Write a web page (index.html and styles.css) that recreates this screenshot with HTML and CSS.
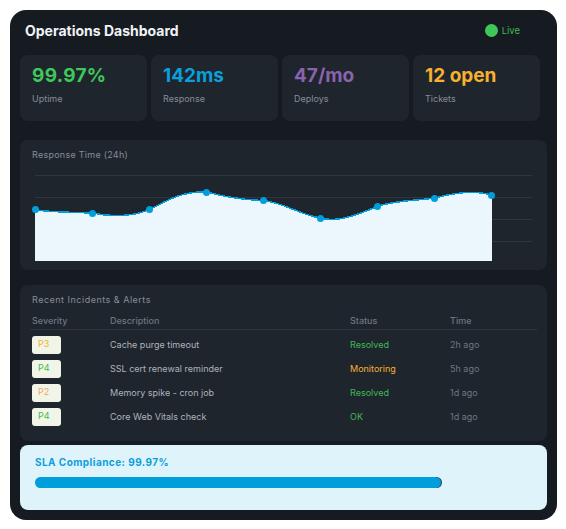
FILE: index.html
```html
<!DOCTYPE html>
<html lang="en">
<head>
<meta charset="utf-8">
<title>Operations Dashboard</title>
<link rel="stylesheet" href="styles.css">
</head>
<body>
<main class="dash">
  <header class="head">
    <h1 class="title">Operations Dashboard</h1>
    <div class="live"><span class="dot"></span><span>Live</span></div>
  </header>
  <section class="stats">
    <div class="stat"><div class="val green">99.97%</div><div class="lab">Uptime</div></div>
    <div class="stat"><div class="val blue">142ms</div><div class="lab">Response</div></div>
    <div class="stat"><div class="val purple">47/mo</div><div class="lab">Deploys</div></div>
    <div class="stat"><div class="val amber">12 open</div><div class="lab">Tickets</div></div>
  </section>
  <section class="panel chart">
    <h2 class="ptitle">Response Time (24h)</h2>
    <svg class="plot" width="527" height="95" viewBox="20 170 527 95">
      <g class="grid" shape-rendering="crispEdges">
        <line x1="35" x2="532" y1="175.5" y2="175.5"/>
        <line x1="35" x2="532" y1="197.5" y2="197.5"/>
        <line x1="35" x2="532" y1="219.5" y2="219.5"/>
        <line x1="35" x2="532" y1="241.5" y2="241.5"/>
      </g>
      <path class="area" shape-rendering="crispEdges" d="M35.5 210 C50 212,75 212.5,92.5 213 C105 216,130 218,149.5 209.5 C165 202,180 191,206.5 192 C225 197,245 200,263.5 200.5 C285 203,300 215,320.5 218 C335 222,350 218,377.5 206.5 C395 200,415 201,434.5 198 C450 194,475 189,491.5 195.5 L492 261 L35 261 Z"/>
      <path class="line" shape-rendering="crispEdges" d="M35.5 210 C50 212,75 212.5,92.5 213 C105 216,130 218,149.5 209.5 C165 202,180 191,206.5 192 C225 197,245 200,263.5 200.5 C285 203,300 215,320.5 218 C335 222,350 218,377.5 206.5 C395 200,415 201,434.5 198 C450 194,475 189,491.5 195.5"/>
      <g class="pts">
        <circle cx="35.5" cy="209.5" r="3.5"/><circle cx="92.5" cy="213.5" r="3.5"/><circle cx="149.5" cy="209.5" r="3.5"/>
        <circle cx="206.5" cy="192.5" r="3.5"/><circle cx="263.5" cy="200.5" r="3.5"/><circle cx="320.5" cy="218.5" r="3.5"/>
        <circle cx="377.5" cy="206.5" r="3.5"/><circle cx="434.5" cy="198.5" r="3.5"/><circle cx="491.5" cy="195.5" r="3.5"/>
      </g>
    </svg>
  </section>
  <section class="panel incidents">
    <h2 class="ptitle">Recent Incidents &amp; Alerts</h2>
    <table class="tbl">
      <thead><tr><th class="c1">Severity</th><th class="c2">Description</th><th class="c3">Status</th><th class="c4">Time</th></tr></thead>
      <tbody>
        <tr><td><span class="badge amber">P3</span></td><td>Cache purge timeout</td><td class="green">Resolved</td><td class="muted">2h ago</td></tr>
        <tr><td><span class="badge green">P4</span></td><td>SSL cert renewal reminder</td><td class="amber">Monitoring</td><td class="muted">5h ago</td></tr>
        <tr><td><span class="badge peach">P2</span></td><td>Memory spike - cron job</td><td class="green">Resolved</td><td class="muted">1d ago</td></tr>
        <tr><td><span class="badge green">P4</span></td><td>Core Web Vitals check</td><td class="green">OK</td><td class="muted">1d ago</td></tr>
      </tbody>
    </table>
  </section>
  <section class="sla">
    <div class="slatext">SLA Compliance: 99.97%</div>
    <div class="bar"></div>
  </section>
</main>
</body>
</html>
```
FILE: styles.css
```css
* { box-sizing: border-box; }
html, body { margin: 0; padding: 0; background: #fff; }
body { font-family: "Inter", "Liberation Sans", sans-serif; }
.dash {
  margin: 10px 0 0 10px;
  width: 547px;
  height: 510px;
  padding: 0 10px;
  background: #161b22;
  border-radius: 16px;
  overflow: hidden;
}
.head {
  height: 45px;
  display: flex;
  align-items: center;
  justify-content: space-between;
  padding: 0 27px 4px 5px;
}
.title { margin: 0; font-size: 14px; font-weight: 700; color: #f0f3f6; }
.live { display: flex; align-items: center; gap: 4px; font-size: 9.5px; color: #3fb950; }
.dot { width: 13px; height: 13px; border-radius: 50%; background: #3fc85a; }
.stats { display: flex; gap: 4px; width: 520px; }
.stat {
  flex: 1;
  height: 66px;
  padding: 9px 12px 0;
  background: #1f252d;
  border-radius: 8px;
}
.val { font-size: 19px; line-height: 23px; font-weight: 700; }
.lab { margin-top: 6px; font-size: 9px; line-height: 12px; color: #868d97; }
.green { color: #3fb950; }
.blue { color: #0a9fdb; }
.purple { color: #8a63ad; }
.amber { color: #f6b12f; }
.peach { color: #f4a46a; }
.muted { color: #6e7681; }
.val.green { color: #3fc85a; letter-spacing: .3px; }
.panel { background: #1f252d; border-radius: 8px; }
.ptitle { margin: 0; font-size: 9px; line-height: 11px; font-weight: 400; color: #868d97; }
.chart { height: 130px; margin-top: 19px; padding-top: 9px; }
.chart .ptitle { padding-left: 12px; letter-spacing: .26px; }
.plot { display: block; margin-top: 10px; }
.grid line { stroke: #30363d; stroke-width: 1; }
.area { fill: #ebf6fd; }
.line { fill: none; stroke: #009fdb; stroke-width: 1.5; }
.pts circle { fill: #009fdb; }
.incidents { height: 156px; margin-top: 15px; padding: 9px 10px 0; }
.incidents .ptitle { padding-left: 2px; letter-spacing: .5px; }
.tbl { width: 507px; margin-top: 6px; border-collapse: collapse; table-layout: fixed; font-size: 9px; color: #adb4bd; }
.tbl th { height: 18px; padding: 2px 0 0 2px; text-align: left; font-weight: 500; color: #6e7681; border-bottom: 1px solid #30363d; }
.tbl td { height: 24px; padding: 0 0 0 2px; }
.tbl td + td { padding-bottom: 2px; }
.tbl tbody tr:first-child td { height: 28px; padding-top: 4px; }
.c1 { width: 78px; }
.c2 { width: 240px; }
.c3 { width: 100px; }
.c4 { width: 89px; }
.badge {
  display: block;
  width: 29px;
  height: 18px;
  padding-left: 6px;
  line-height: 16px;
  background: #f1f5e8;
  border-radius: 3px;
}
.sla { height: 65px; margin-top: 4px; padding: 11px 15px 0; background: #dff3fb; border-radius: 8px; }
.slatext { font-size: 10px; line-height: 13px; font-weight: 700; color: #0a9fdb; letter-spacing: .45px; }
.bar { width: 406px; height: 11px; margin-top: 8px; background: #009fdb; border-radius: 6px; box-shadow: 1px 0 0 #2c3e4a; }
```
